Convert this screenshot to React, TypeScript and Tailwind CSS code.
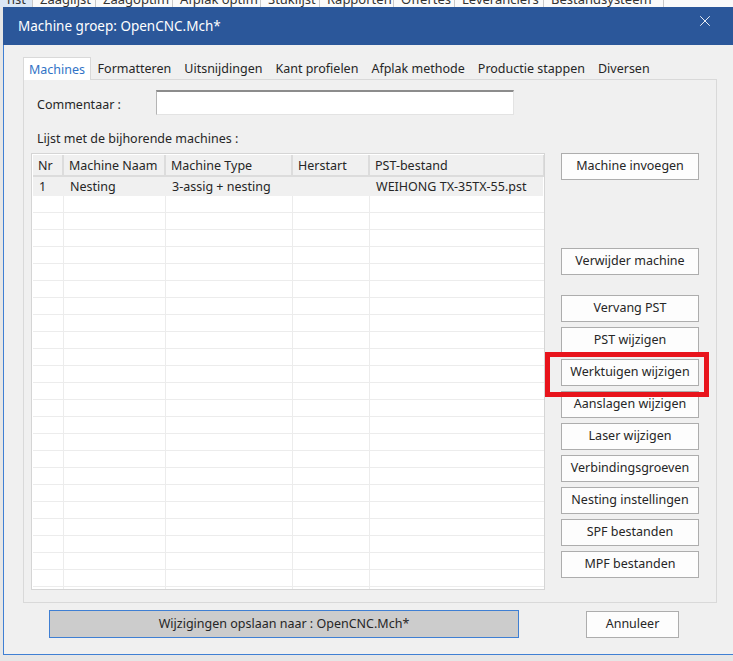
import { X } from "lucide-react";

const menu = [
  { label: "nst", w: "w-[33px]" },
  { label: "Zaaglijst", w: "w-[63px]" },
  { label: "Zaagoptim", w: "w-[77px]" },
  { label: "Afplak optim", w: "w-[88px]" },
  { label: "Stuklijst", w: "w-[59px]" },
  { label: "Rapporten", w: "w-[74px]" },
  { label: "Offertes", w: "w-[61px]" },
  { label: "Leveranciers", w: "w-[89px]" },
  { label: "Bestandsysteem", w: "w-[120px]" },
];

const tabs = [
  "Machines",
  "Formatteren",
  "Uitsnijdingen",
  "Kant profielen",
  "Afplak methode",
  "Productie stappen",
  "Diversen",
];

const columns = [
  { label: "Nr", w: "w-[31px]" },
  { label: "Machine Naam", w: "w-[102px]" },
  { label: "Machine Type", w: "w-[127px]" },
  { label: "Herstart", w: "w-[77px]" },
  { label: "PST-bestand", w: "w-[175px]" },
];

const firstRow = ["1", "Nesting", "3-assig + nesting", "", "WEIHONG TX-35TX-55.pst"];

const editButtons = [
  "Vervang PST",
  "PST wijzigen",
  "Werktuigen wijzigen",
  "Aanslagen wijzigen",
  "Laser wijzigen",
  "Verbindingsgroeven",
  "Nesting instellingen",
  "SPF bestanden",
  "MPF bestanden",
];

function Btn({ label, className = "" }: { label: string; className?: string }) {
  return (
    <button
      type="button"
      className={`h-[27px] w-[138px] border border-[#adadad] bg-[#fdfdfd] text-[12.5px] text-[#262626] ${className}`}
    >
      {label}
    </button>
  );
}

export default function App() {
  const emptyRows = Array.from({ length: 24 });

  return (
    <div className="relative h-[661px] w-[733px] overflow-hidden bg-[#e6e6e6] font-['Noto_Sans',sans-serif]">
      {/* menu bar of the main app behind the dialog */}
      <div className="flex h-[7px] overflow-hidden bg-[#fafafa]">
        {menu.map((m, i) => (
          <div
            key={m.label}
            className={`${m.w} shrink-0 border-r border-[#c8c8c8] pl-[7px] -mt-[8px] text-[13px] leading-[15px] text-[#333] ${i === 0 ? "pl-0 bg-[#dbe7f5]" : ""}`}
          >
            {m.label}
          </div>
        ))}
      </div>

      {/* dialog */}
      <div className="ml-[3px] w-[740px] border-b border-l border-[#3f7fd3] bg-[#f0f0f0]">
        <div className="-ml-px flex h-[38px] items-center justify-between bg-[#2b579a] pl-[15px] pr-[29px]">
          <span className="text-[13.5px] text-white">Machine groep: OpenCNC.Mch*</span>
          <X size={18} strokeWidth={1.2} className="-mt-[10px] text-white" />
        </div>

        <div className="pt-[12px]">
          {/* tabs */}
          <div className="ml-[19px] flex h-[22px] items-stretch">
            {tabs.map((t, i) =>
              i === 0 ? (
                <div
                  key={t}
                  className="relative z-10 -mb-px flex items-center border border-b-0 border-[#d9d9d9] bg-white px-[5px] pt-[2px] text-[12.5px] text-[#3173c6]"
                >
                  {t}
                </div>
              ) : (
                <div key={t} className="flex items-center px-[6.5px] pt-[2px] text-[12.5px] text-[#262626]">
                  {t}
                </div>
              )
            )}
          </div>

          {/* tab panel */}
          <div className="ml-[19px] h-[524px] w-[694px] border border-[#d9d9d9] bg-[#f0f0f0] pt-[10px]">
            <div className="flex items-center">
              <span className="ml-[13px] w-[119px] pt-[6px] text-[12.5px] text-[#262626]">Commentaar :</span>
              <div className="h-[25px] w-[358px] border-t-2 border-l border-r border-b border-t-[#8c8c8c] border-l-[#b4b4b4] border-r-[#e3e3e3] border-b-[#e3e3e3] bg-white" />
            </div>

            <div className="ml-[13px] mt-[15px] text-[12.5px] leading-[17px] text-[#262626]">
              Lijst met de bijhorende machines :
            </div>

            <div className="mt-[6px] flex">
              {/* machine table */}
              <div className="ml-[7px] h-[437px] w-[514px] overflow-hidden border border-[#d5d5d5] bg-white p-px">
                <div className="flex h-[22px] bg-[#f0f0f0]">
                  {columns.map((c) => (
                    <div
                      key={c.label}
                      className={`${c.w} shrink-0 border-r-2 border-b-2 border-[#dcdcdc] pl-[5px] text-[12.5px] leading-[21px] text-[#262626]`}
                    >
                      {c.label}
                    </div>
                  ))}
                </div>
                <div className="flex h-[19px] bg-[#f0f0f0]">
                  {columns.map((c, i) => (
                    <div
                      key={c.label}
                      className={`${c.w} shrink-0 pl-[6px] text-[12.5px] leading-[20px] text-[#262626]`}
                    >
                      {firstRow[i]}
                    </div>
                  ))}
                </div>
                {emptyRows.map((_, r) => (
                  <div key={r} className="flex h-[17px]">
                    {columns.map((c) => (
                      <div key={c.label} className={`${c.w} shrink-0 border-r border-b border-[#ececec]`} />
                    ))}
                  </div>
                ))}
              </div>

              {/* buttons */}
              <div className="ml-[16px] flex flex-col">
                <Btn label="Machine invoegen" />
                <Btn label="Verwijder machine" className="mt-[68px]" />
                <div className="mt-[20px] flex flex-col gap-[5px]">
                  {editButtons.map((b) => (
                    <Btn key={b} label={b} />
                  ))}
                </div>
              </div>
            </div>
          </div>

          {/* footer buttons */}
          <div className="mt-[7px] flex h-[44px] items-start">
            <button
              type="button"
              className="ml-[45px] h-[28px] w-[470px] border border-[#3f7fd3] bg-[#cccccc] text-[12.5px] text-[#262626]"
            >
              Wijzigingen opslaan naar : OpenCNC.Mch*
            </button>
            <button
              type="button"
              className="ml-[67px] mt-px h-[27px] w-[93px] border border-[#adadad] bg-[#fdfdfd] text-[12.5px] text-[#262626]"
            >
              Annuleer
            </button>
          </div>
        </div>
      </div>

      {/* red highlight marker */}
      <div className="absolute left-[545px] top-[352px] h-[45px] w-[164px] border-[5px] border-[#e8141c]" />
    </div>
  );
}
